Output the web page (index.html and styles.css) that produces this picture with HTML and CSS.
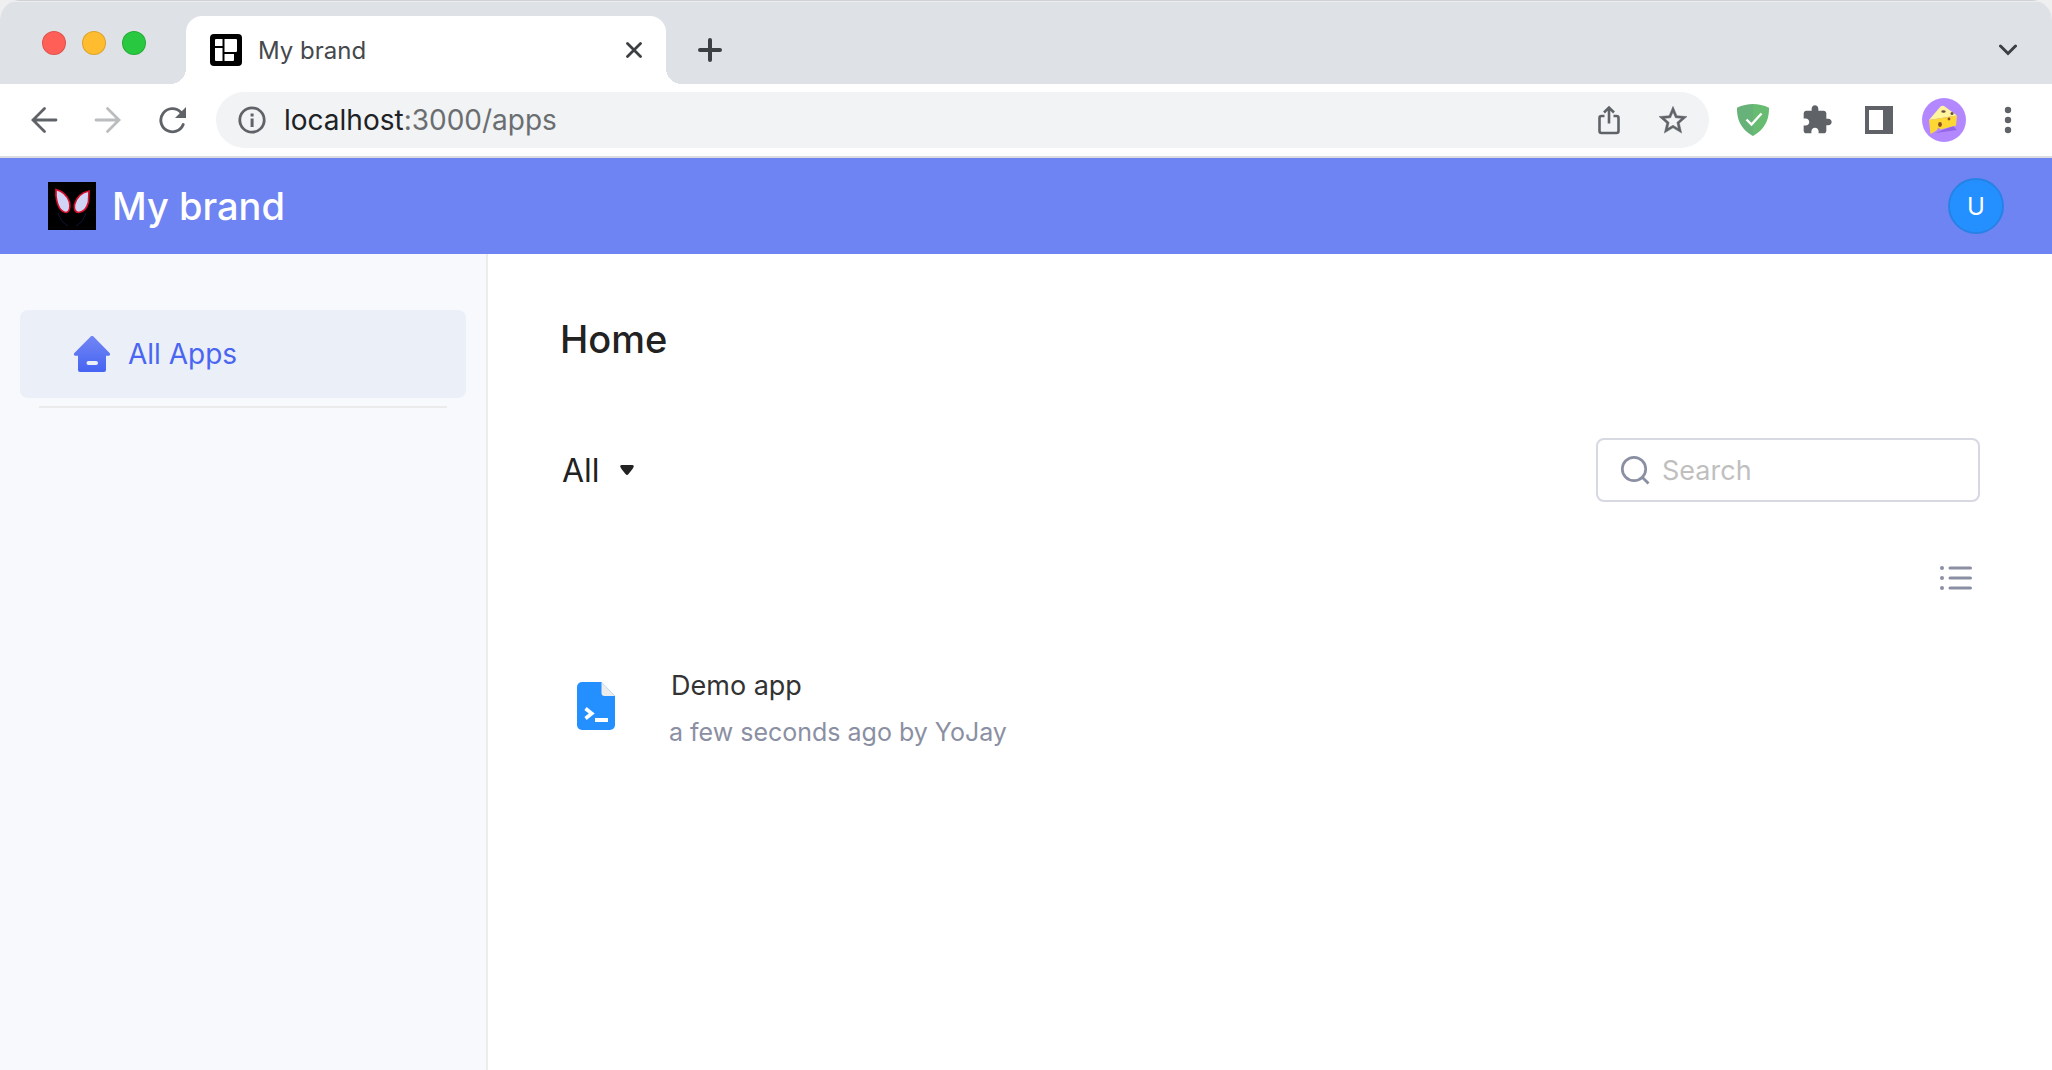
FILE: index.html
```html
<!DOCTYPE html>
<html lang="en">
<head>
<meta charset="utf-8">
<meta name="viewport" content="width=device-width, initial-scale=1">
<title>My brand</title>
<link rel="stylesheet" href="styles.css">
</head>
<body>
<div class="window">
  <div class="tabstrip">
    <div class="lights">
      <button class="light light-close" aria-label="Close window"></button>
      <button class="light light-min" aria-label="Minimize window"></button>
      <button class="light light-max" aria-label="Zoom window"></button>
    </div>
    <div class="tab">
      <svg width="32" height="32" viewBox="0 0 32 32" aria-hidden="true"><rect width="32" height="32" rx="4"/><path fill="#fff" d="M6 5h6.500v7H5V6a1 1 0 0 1 1-1zM14.500 5H26a1 1 0 0 1 1 1v11a1 1 0 0 1-1 1H14.500zM5 14h7.500v13H6a1 1 0 0 1-1-1zM14.500 20H24v6a1 1 0 0 1-1 1h-8.500z"/></svg>
      <span class="tab-title">My brand</span>
      <button class="icon-btn" aria-label="Close tab"><svg width="16" height="16" viewBox="0 0 16 16"><path d="M1.500 1.500l13 13M14.500 1.500l-13 13" stroke="#3c4043" stroke-width="2.800" stroke-linecap="round"/></svg></button>
    </div>
    <button class="icon-btn new-tab" aria-label="New tab"><svg width="24" height="24" viewBox="0 0 24 24"><path d="M12 2v20M2 12h20" stroke="#3c4043" stroke-width="4" stroke-linecap="round"/></svg></button>
    <button class="icon-btn tab-search" aria-label="Search tabs"><svg width="18" height="12" viewBox="0 0 18 12"><path d="M1.500 2L9 9.500 16.500 2" fill="none" stroke="#3c4043" stroke-width="3" stroke-linecap="round"/></svg></button>
  </div>

  <div class="toolbar">
    <div class="nav">
      <button class="icon-btn" aria-label="Back"><svg width="28" height="28" viewBox="0 0 28 28"><path d="M26 14H3.500M14.500 2.500L3 14l11.500 11.500" fill="none" stroke="#5f6368" stroke-width="2.800" stroke-linecap="round"/></svg></button>
      <button class="icon-btn" aria-label="Forward"><svg width="28" height="28" viewBox="0 0 28 28"><path d="M2 14h22.500M13.500 2.500L25 14 13.500 25.500" fill="none" stroke="#babcbe" stroke-width="2.800" stroke-linecap="round"/></svg></button>
      <button class="icon-btn" aria-label="Reload"><svg width="28" height="28" viewBox="0 0 28 28"><path d="M22.800 6.200A11.600 11.600 0 1 0 25.200 18.500" fill="none" stroke="#5f6368" stroke-width="2.900" stroke-linecap="round"/><path d="M28 1v11H17z" fill="#5f6368"/></svg></button>
    </div>
    <div class="omnibox">
      <svg width="28" height="28" viewBox="0 0 28 28" aria-hidden="true"><circle cx="14" cy="14" r="12.200" fill="none" stroke="#5f6368" stroke-width="2.800"/><path d="M12.600 7.500h3v3h-3zM12.600 12.500h3V21h-3z" fill="#5f6368"/></svg>
      <a class="url" href="#">localhost<span class="url-rest">:3000/apps</span></a>
      <button class="icon-btn" aria-label="Share"><svg width="28" height="30" viewBox="0 0 28 30"><path d="M9.500 11H6.500a2 2 0 0 0-2 2v13a2 2 0 0 0 2 2h15a2 2 0 0 0 2-2V13a2 2 0 0 0-2-2h-3M14 18.500V3M9 7.500l5-5 5 5" fill="none" stroke="#5f6368" stroke-width="2.600"/></svg></button>
      <button class="icon-btn" aria-label="Bookmark"><svg width="28" height="28" viewBox="0 0 24 24"><path fill="#5f6368" stroke="#5f6368" stroke-width=".4" d="M24 9.040l-8.630-.740L12 .300 8.630 8.310 0 9.040l6.550 5.680L4.580 23.200 12 18.700l7.420 4.490-1.960-8.480L24 9.040zM12 16.450l-4.510 2.720 1.200-5.130-3.980-3.450 5.250-.450L12 5.300l2.050 4.850 5.250.450-3.980 3.450 1.200 5.130L12 16.450z"/></svg></button>
    </div>
    <div class="extensions">
      <button class="icon-btn" aria-label="Ad blocker"><svg width="32" height="32" viewBox="0 0 32 32"><path fill="#67b279" d="M16 0C11 0 5 1.200 0 3.700 0 9.300-.100 23.100 16 32z"/><path fill="#68bc71" d="M16 0c5 0 11 1.200 16 3.700C32 9.300 32.100 23.100 16 32z"/><path d="M9.500 15.500l5 5 10-11" fill="none" stroke="#fff" stroke-width="2.400"/></svg></button>
      <button class="icon-btn" aria-label="Extensions"><svg width="32" height="32" viewBox="0 0 24 24"><path fill="#5f6368" d="M20.500 11H19V7c0-1.100-.900-2-2-2h-4V3.500C13 2.120 11.880 1 10.500 1S8 2.120 8 3.500V5H4c-1.100 0-1.990.900-1.990 2v3.800H3.500c1.490 0 2.700 1.210 2.700 2.700s-1.210 2.700-2.700 2.700H2V20c0 1.100.900 2 2 2h3.800v-1.500c0-1.490 1.210-2.700 2.700-2.700 1.490 0 2.700 1.210 2.700 2.700V22H17c1.100 0 2-.900 2-2v-4h1.500c1.380 0 2.500-1.120 2.500-2.500S21.880 11 20.500 11z"/></svg></button>
      <button class="icon-btn" aria-label="Side panel"><svg width="28" height="28" viewBox="0 0 28 28"><path fill="#5f6368" fill-rule="evenodd" d="M0 0h28v28H0zM4 4v20h14V4z"/></svg></button>
      <button class="icon-btn profile" aria-label="Profile"><svg width="44" height="44" viewBox="0 0 44 44"><circle cx="22" cy="22" r="22" fill="#b388ff"/><path d="M13 35l22-3-4-4z" fill="#7c4ddb" opacity=".6"/><path d="M7 22L18.500 8.500Q20 7.500 22 8l13 9.500z" fill="#fff59d"/><path d="M7 22l28-4.500-1 10-15.500 4-2-2-2 3L8.500 36z" fill="#fdd835"/><ellipse cx="21.500" cy="13.500" rx="2.200" ry="1.200" fill="#6d4c41"/><circle cx="30" cy="15.500" r="1.500" fill="#6d4c41"/><ellipse cx="18" cy="26.500" rx="1.900" ry="2.400" fill="#8d4b24"/><circle cx="27" cy="21" r="1.400" fill="#8d4b24"/></svg></button>
      <button class="icon-btn menu" aria-label="Menu"><svg width="8" height="28" viewBox="0 0 8 28" fill="#5f6368"><circle cx="4" cy="4" r="3.200"/><circle cx="4" cy="14" r="3.200"/><circle cx="4" cy="24" r="3.200"/></svg></button>
    </div>
  </div>

  <header class="app-header">
    <a class="brand" href="#">
      <svg width="48" height="48" viewBox="0 0 48 48" aria-hidden="true"><path d="M0 0h48v48H0z"/><path d="M8 7.500Q18 10 21.500 20q1.500 9-3 10.500Q10 30 8 14z" fill="#d1d5f5" stroke="#d60f2c" stroke-width="1.700"/><path d="M41 9q-11 2-14.500 13.500-1 7.500 4 8Q38 30 40.500 20z" fill="#d1d5f5" stroke="#d60f2c" stroke-width="1.700"/><path d="M10 31q3 9 10 13M38 31q-3 9-10 13" fill="none" stroke="#10143c" stroke-width="1"/></svg>
      <span>My brand</span>
    </a>
    <button class="user" aria-label="User menu">U</button>
  </header>

  <div class="body">
    <nav class="sidebar">
      <a class="side-item" href="#">
        <svg width="36" height="36" viewBox="0 0 36 36" aria-hidden="true"><defs><linearGradient id="home" x1="0" y1="0" x2="0" y2="1"><stop offset="0" stop-color="#7286f3"/><stop offset="1" stop-color="#4664f3"/></linearGradient></defs><path fill="url(#home)" fill-rule="evenodd" d="M16.700.500a2 2 0 0 1 2.800 0l16.100 16.400c1 1.100.500 2.800-1 2.800H32V34a2 2 0 0 1-2 2H6a2 2 0 0 1-2-2V19.700H1.400c-1.500 0-1.900-1.700-1-2.800zM14.500 25a2 2 0 0 0 0 4h7.500a2 2 0 0 0 0-4z"/></svg>
        <span>All Apps</span>
      </a>
      <hr class="divider">
    </nav>
    <main class="main">
      <h1 class="title">Home</h1>
      <div class="filters">
        <label class="filter">
          <select class="filter-select" aria-label="App type"><option>All</option></select>
          <svg width="14" height="12" viewBox="0 0 14 12" aria-hidden="true"><path d="M1.500 1h11q1.500 0 1.300 1.500-.300 1.500-5.300 7.500-1.500 2-3 0Q.500 4 .200 2.500 0 1 1.500 1z" fill="#222"/></svg>
        </label>
        <label class="search">
          <svg width="30" height="30" viewBox="0 0 30 30" aria-hidden="true"><circle cx="14" cy="14" r="11.700" fill="none" stroke="#8b8fa3" stroke-width="2.700"/><path d="M21.500 21.500l7 7" stroke="#8b8fa3" stroke-width="2.900"/></svg>
          <input class="search-input" type="text" placeholder="Search" aria-label="Search">
        </label>
      </div>
      <div class="view-row">
        <button class="icon-btn" aria-label="List view"><svg width="32" height="24" viewBox="0 0 32 24" fill="#8b8fa3"><circle cx="2" cy="2" r="2"/><circle cx="2" cy="12" r="2"/><circle cx="2" cy="22" r="2"/><path d="M10 2h20.500M10 12h20.500M10 22h20.500" stroke="#8b8fa3" stroke-width="3" stroke-linecap="round"/></svg></button>
      </div>
      <a class="app" href="#">
        <svg width="38" height="48" viewBox="0 0 38 48" aria-hidden="true"><path d="M5 0h19.500L38 14v29a5 5 0 0 1-5 5H5a5 5 0 0 1-5-5V5a5 5 0 0 1 5-5z" fill="#2490ff"/><path d="M24.500 0L38 14H27.500a3 3 0 0 1-3-3z" fill="#ececec"/><path d="M8.500 26.500l6.300 5-6.300 5" fill="none" stroke="#fff" stroke-width="3.600"/><path d="M18 36h13v4H18z" fill="#fff"/></svg>
        <span class="app-text">
          <span class="app-name">Demo app</span>
          <span class="app-meta">a few seconds ago by YoJay</span>
        </span>
      </a>
    </main>
  </div>
</div>
</body>
</html>
```
FILE: styles.css
```css
* { box-sizing: border-box; }

body {
  margin: 0;
  background: #efefef;
  font-family: Inter, "Liberation Sans", sans-serif;
  color: #222;
}

a { color: inherit; text-decoration: none; }
svg { display: block; flex: none; }
button, input, select { font: inherit; color: inherit; }

.window {
  display: flex;
  flex-direction: column;
  min-height: 100vh;
  overflow: hidden;
  border-radius: 20px 20px 0 0;
  background: #fff;
}

.icon-btn {
  display: flex;
  flex: none;
  padding: 0;
  border: 0;
  background: none;
}

/* Browser tabs */
.tabstrip {
  display: flex;
  align-items: flex-end;
  height: 84px;
  padding: 0 35px 0 42px;
  background: #dee1e6;
  box-shadow: inset 0 1px 0 #cfd1d4, inset 0 2px 0 #eceef0;
}

.lights {
  display: flex;
  gap: 16px;
  width: 144px;
  padding-bottom: 29px;
}

.light {
  width: 24px;
  height: 24px;
  padding: 0;
  border: 1px solid #0002;
  border-radius: 50%;
}

.light-close { background: #ff5f57; }
.light-min { background: #febc2e; }
.light-max { background: #28c840; }

.tab {
  position: relative;
  display: flex;
  align-items: center;
  gap: 16px;
  width: 480px;
  height: 68px;
  padding: 0 24px;
  border-radius: 16px 16px 0 0;
  background: #fff;
}

.tab::before,
.tab::after {
  content: "";
  position: absolute;
  bottom: 0;
  width: 16px;
  height: 16px;
}

.tab::before {
  right: 100%;
  background: radial-gradient(circle at 0 0, transparent 16px, #fff 16px);
}

.tab::after {
  left: 100%;
  background: radial-gradient(circle at 100% 0, transparent 16px, #fff 16px);
}

.tab-title { flex: 1; font-size: 24px; color: #45484c; }
.new-tab { margin: 0 auto 22px 32px; }
.tab-search { margin-bottom: 28px; }

/* Browser toolbar */
.toolbar {
  display: flex;
  align-items: center;
  height: 74px;
  padding: 0 40px 0 30px;
  border-bottom: 2px solid #dadce0;
}

.nav { display: flex; gap: 36px; margin-right: 30px; }

.omnibox {
  display: flex;
  flex: 1;
  align-items: center;
  gap: 36px;
  height: 56px;
  padding: 0 22px;
  border-radius: 28px;
  background: #f1f3f4;
}

.url { flex: 1; margin-left: -18px; font-size: 28px; color: #202124; }
.url-rest { color: #6b6e71; }

.extensions {
  display: flex;
  align-items: center;
  gap: 32px;
  margin-left: 28px;
}

.profile { margin-left: -3px; }
.menu { margin-left: 6px; }

/* App header */
.app-header {
  display: flex;
  align-items: center;
  justify-content: space-between;
  height: 96px;
  padding: 0 48px;
  background: #6e84f3;
}

.brand {
  display: flex;
  align-items: center;
  gap: 16px;
  font-size: 38px;
  font-weight: 500;
  color: #fff;
}

.user {
  width: 56px;
  height: 56px;
  padding: 0;
  border: 2px solid #2682e6;
  border-radius: 50%;
  background: #2490ff;
  color: #fff;
  font-size: 24px;
}

/* Page */
.body { display: flex; flex: 1; }

.sidebar {
  width: 488px;
  padding: 56px 20px 0;
  border-right: 2px solid #ececec;
  background: #f8f9fd;
}

.side-item {
  display: flex;
  align-items: center;
  gap: 18px;
  height: 88px;
  padding: 0 54px;
  border-radius: 8px;
  background: #ebeff7;
  color: #4965f2;
  font-size: 28px;
}

.divider {
  height: 2px;
  margin: 8px 19px;
  border: 0;
  background: #ebebeb;
}

.main { flex: 1; padding: 60px 72px; }

.title {
  margin: 0;
  font-size: 38px;
  line-height: 50px;
  font-weight: 500;
}

.filters {
  display: flex;
  align-items: center;
  justify-content: space-between;
  margin-top: 74px;
}

.filter { display: flex; align-items: center; gap: 20px; padding-left: 2px; }

.filter-select {
  appearance: none;
  padding: 0;
  border: 0;
  background: none;
  font-size: 32px;
}

.search {
  display: flex;
  align-items: center;
  gap: 12px;
  width: 384px;
  height: 64px;
  padding: 0 22px;
  border: 2px solid #d7d9e2;
  border-radius: 8px;
}

.search-input {
  flex: 1;
  min-width: 0;
  padding: 0;
  border: 0;
  outline: 0;
  background: none;
  font-size: 27px;
}

.search-input::placeholder { color: #bfbfbf; opacity: 1; }

.view-row {
  display: flex;
  justify-content: flex-end;
  margin-top: 64px;
  padding-right: 8px;
}

.app {
  display: flex;
  align-items: center;
  gap: 54px;
  margin-top: 68px;
  padding-left: 17px;
}

.app-text { display: flex; flex-direction: column; padding-top: 4px; }
.app-name { padding-left: 2px; font-size: 27px; line-height: 48px; color: #333; }
.app-meta { font-size: 25px; line-height: 44px; color: #8b8fa3; }
```
